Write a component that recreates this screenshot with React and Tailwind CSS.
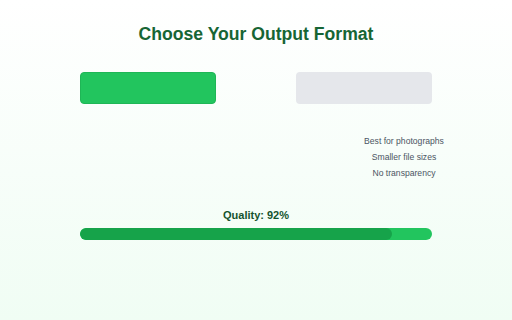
export default function App() {
  return (
    <div className="w-[512px] h-[320px] bg-gradient-to-b from-white to-[#f0fdf4] flex flex-col items-center" style={{ fontFamily: '"Liberation Sans", Arial, sans-serif' }}>
      <h1 className="mt-[23px] text-[17.6px] leading-[22px] font-bold text-[#166534]">Choose Your Output Format</h1>
      <div className="mt-[27px] w-[352px] flex justify-between">
        <div className="w-[136px] h-[32px] rounded-[4px] bg-[#22c55e] border border-[#1fb656]"></div>
        <div className="w-[136px] h-[32px] rounded-[4px] bg-[#e5e7eb]"></div>
      </div>
      <div className="w-[352px] flex justify-end">
        <div className="mt-[29px] mr-[-17px] w-[90px] flex flex-col items-center text-[8.6px] leading-[16px] text-[#4b5563]">
          <span>Best for photographs</span>
          <span>Smaller file sizes</span>
          <span>No transparency</span>
        </div>
      </div>
      <div className="mt-[27px] text-[11px] leading-[14px] font-bold text-[#14532d]">Quality: 92%</div>
      <div className="mt-[6px] w-[352px] h-[12px] rounded-full bg-[#22c55e] overflow-hidden">
        <div className="h-full w-[312px] rounded-full bg-[#16a34a]"></div>
      </div>
    </div>
  );
}
